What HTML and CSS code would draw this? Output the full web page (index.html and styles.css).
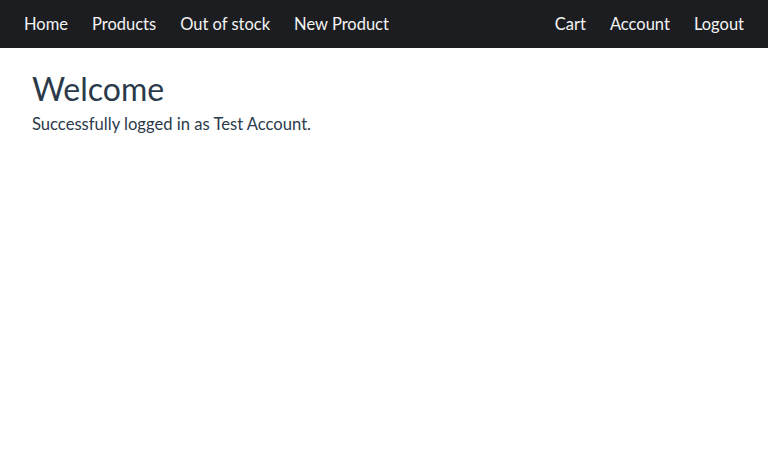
FILE: index.html
```html
<!DOCTYPE html>
<html lang="en">
<head>
<meta charset="utf-8">
<title>Welcome</title>
<link rel="stylesheet" href="styles.css">
</head>
<body>
<nav class="navbar">
  <div class="nav-group">
    <a class="nav-link" href="#">Home</a>
    <a class="nav-link" href="#">Products</a>
    <a class="nav-link" href="#">Out of stock</a>
    <a class="nav-link" href="#">New Product</a>
  </div>
  <div class="nav-group">
    <a class="nav-link" href="#">Cart</a>
    <a class="nav-link" href="#">Account</a>
    <a class="nav-link" href="#">Logout</a>
  </div>
</nav>
<main class="content">
  <h1 class="title">Welcome</h1>
  <p class="message">Successfully logged in as Test Account.</p>
</main>
</body>
</html>
```
FILE: styles.css
```css
* { box-sizing: border-box; }
body {
  margin: 0;
  font-family: Lato, "Open Sans", sans-serif;
  color: #2b3a4a;
  background: #fff;
}
.navbar {
  height: 48px;
  background: #1c1d21;
  display: flex;
  justify-content: space-between;
  align-items: center;
  padding: 0 12px;
}
.nav-group {
  display: flex;
  align-items: center;
}
.nav-link {
  color: #f4f4f4;
  text-decoration: none;
  font-size: 16.5px;
  padding: 0 12px;
  line-height: 48px;
}
.content {
  padding: 22px 32px;
}
.title {
  margin: 0;
  font-size: 32px;
  font-weight: 400;
  line-height: 38px;
}
.message {
  margin: 4px 0 0;
  font-size: 16.6px;
  line-height: 24px;
}
```
